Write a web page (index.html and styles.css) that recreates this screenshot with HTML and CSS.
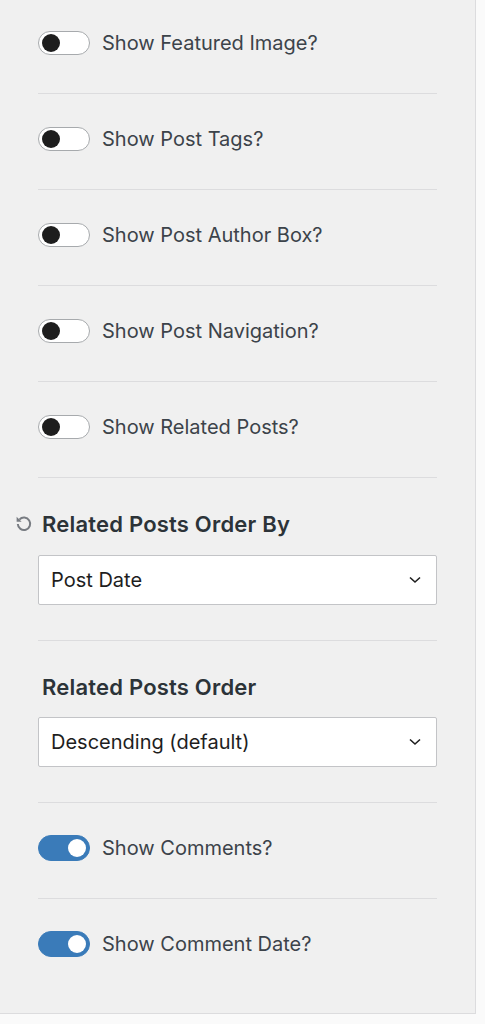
FILE: index.html
```html
<!DOCTYPE html>
<html>
<head>
<meta charset="utf-8">
<link rel="stylesheet" href="styles.css">
</head>
<body>
<div class="page">
  <div class="panel">
    <div class="inner">
      <div class="row"><span class="toggle"><span class="knob"></span></span><span class="label">Show Featured Image?</span></div>
      <div class="sep"></div>
      <div class="row"><span class="toggle"><span class="knob"></span></span><span class="label">Show Post Tags?</span></div>
      <div class="sep"></div>
      <div class="row"><span class="toggle"><span class="knob"></span></span><span class="label">Show Post Author Box?</span></div>
      <div class="sep"></div>
      <div class="row"><span class="toggle"><span class="knob"></span></span><span class="label">Show Post Navigation?</span></div>
      <div class="sep"></div>
      <div class="row"><span class="toggle"><span class="knob"></span></span><span class="label">Show Related Posts?</span></div>
      <div class="sep"></div>
      <div class="field first">
        <div class="heading">
          <svg class="reset" viewBox="0 0 20 20" width="20" height="20"><path d="M5.4 5.6A6.2 6.2 0 1 1 3.8 10" fill="none" stroke="#787c82" stroke-width="2"/><path d="M2.6 2.8v5h5z" fill="#787c82"/></svg>
          <span>Related Posts Order By</span>
        </div>
        <div class="select"><span>Post Date</span><svg viewBox="0 0 12 8" width="12" height="8"><path d="M1 1.5l5 4.5 5-4.5" fill="none" stroke="#1e1e1e" stroke-width="1.6"/></svg></div>
      </div>
      <div class="sep"></div>
      <div class="field">
        <div class="heading"><span>Related Posts Order</span></div>
        <div class="select"><span>Descending (default)</span><svg viewBox="0 0 12 8" width="12" height="8"><path d="M1 1.5l5 4.5 5-4.5" fill="none" stroke="#1e1e1e" stroke-width="1.6"/></svg></div>
      </div>
      <div class="sep"></div>
      <div class="row"><span class="toggle on"><span class="knob"></span></span><span class="label">Show Comments?</span></div>
      <div class="sep"></div>
      <div class="row"><span class="toggle on"><span class="knob"></span></span><span class="label">Show Comment Date?</span></div>
    </div>
  </div>
</div>
</body>
</html>
```
FILE: styles.css
```css
html, body {
  margin: 0;
  padding: 0;
  background: #fafafa;
}
body {
  font-family: "Inter", "Liberation Sans", Arial, sans-serif;
  color: #3c434a;
}
.page {
  width: 485px;
  height: 1024px;
  overflow: hidden;
}
.panel {
  width: 475px;
  height: 1013px;
  background: #f0f0f0;
  border-right: 1px solid #dcdcde;
  border-bottom: 1px solid #dcdcde;
}
.inner {
  padding: 0 38px;
  display: flex;
  flex-direction: column;
}
.row {
  height: 48px;
  display: flex;
  align-items: center;
  gap: 12px;
  margin: 21px 0 26px;
}
.inner > .row:first-child {
  margin-top: 19px;
}
.sep {
  height: 1px;
  background: #dcdcde;
}
.toggle {
  width: 50px;
  height: 22px;
  border: 1px solid #a7aaad;
  border-radius: 13px;
  background: #fff;
  position: relative;
  flex: none;
}
.toggle .knob {
  position: absolute;
  left: 3px;
  top: 2px;
  width: 18px;
  height: 18px;
  border-radius: 50%;
  background: #1e1e1e;
}
.toggle.on {
  background: #3a7bb9;
  border-color: #3a7bb9;
  height: 24px;
}
.toggle.on .knob {
  background: #fff;
  left: auto;
  right: 3px;
  top: 3px;
}
.label {
  font-size: 20px;
  color: #3c434a;
}
.field {
  display: flex;
  flex-direction: column;
  padding: 32px 0 35px;
}
.heading {
  display: flex;
  align-items: center;
  height: 28px;
  font-size: 22px;
  font-weight: 600;
  letter-spacing: 0.2px;
  color: #2c3338;
  margin-left: 4px;
  position: relative;
  margin-bottom: 16px;
}
.field.first .heading {
  margin-bottom: 17px;
}
.reset {
  position: absolute;
  left: -28px;
  top: 4px;
}
.select {
  height: 48px;
  background: #fff;
  border: 1px solid #c3c4c7;
  border-radius: 2px;
  display: flex;
  align-items: center;
  justify-content: space-between;
  padding: 0 15px 0 12px;
  font-size: 20px;
  color: #1e1e1e;
}
```
